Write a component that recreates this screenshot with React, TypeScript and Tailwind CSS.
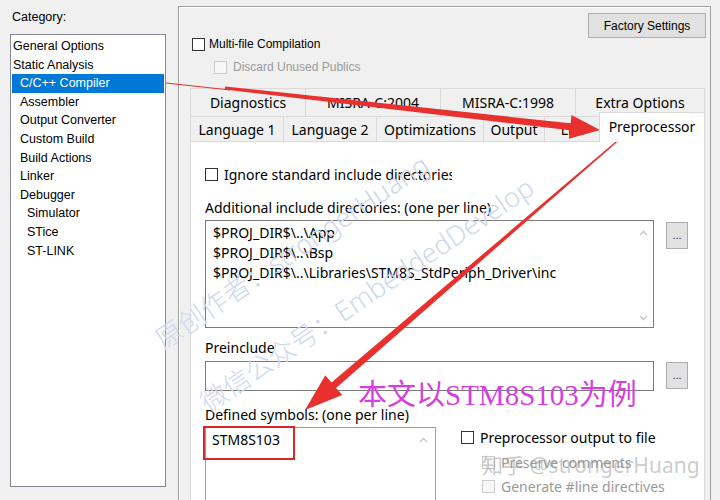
import React from "react";

type Tab = { label: string; w: string };

const ui = "font-['Noto_Sans','Noto_Sans_CJK_SC',sans-serif]";
const win = "font-['Liberation_Sans',Arial,sans-serif]";

const categories: [string, number][] = [
    ["General Options", 0],
    ["Static Analysis", 0],
    ["C/C++ Compiler", 1],
    ["Assembler", 1],
    ["Output Converter", 1],
    ["Custom Build", 1],
    ["Build Actions", 1],
    ["Linker", 1],
    ["Debugger", 1],
    ["Simulator", 2],
    ["STice", 2],
    ["ST-LINK", 2],
];

const indent = ["pl-[1px]", "pl-[8px]", "pl-[15px]"];

const row1: Tab[] = [
    { label: "Diagnostics", w: "w-[115px]" },
    { label: "MISRA-C:2004", w: "w-[135px]" },
    { label: "MISRA-C:1998", w: "w-[135px]" },
    { label: "Extra Options", w: "w-[130px] border-r" },
];

const row2: Tab[] = [
    { label: "Language 1", w: "w-[93px]" },
    { label: "Language 2", w: "w-[93px]" },
    { label: "Optimizations", w: "w-[107px]" },
    { label: "Output", w: "w-[61px]" },
    { label: "List", w: "w-[55px]" },
];

const includeDirs = [
    "$PROJ_DIR$\\..\\App",
    "$PROJ_DIR$\\..\\Bsp",
    "$PROJ_DIR$\\..\\Libraries\\STM8S_StdPeriph_Driver\\inc",
];

function Check ({ disabled }: { disabled?: boolean })
{
    return (
        <span
            className={
                disabled
                    ? "block w-[13px] h-[13px] shrink-0 border border-[#cccccc] bg-[#f7f7f7]"
                    : "block w-[13px] h-[13px] shrink-0 border border-[#333333] bg-white"
            }
        />
    );
}

function Chevron ({ up }: { up?: boolean })
{
    return (
        <svg width="9" height="6" viewBox="0 0 9 6" className="shrink-0">
            <path
                d={up ? "M1 5 L4.5 1.5 L8 5" : "M1 1 L4.5 4.5 L8 1"}
                fill="none"
                stroke="#c4c4c4"
                strokeWidth="1.3"
            />
        </svg>
    );
}

function DotsButton ()
{
    return (
        <button
            type="button"
            className={`ml-[12px] w-[22px] h-[27px] shrink-0 border border-[#adadad] bg-[#e1e1e1] text-[11px] leading-none text-[#222] ${win}`}
        >
            ...
        </button>
    );
}

export default function App ()
{
    return (
        <div className="relative w-[720px] h-[500px] overflow-hidden bg-[#f0f0f0] flex text-black">
            {/* category list */}
            <div className={`w-[178px] shrink-0 pl-[10px] pt-[9px] ${win}`}>
                <div className="pl-[2px] h-[16px] text-[12.5px] leading-[16px]">Category:</div>
                <div className="mt-[9px] w-[156px] h-[453px] border border-[#828790] bg-white px-px pt-[2px]">
                    {categories.map(([name, level]) => (
                        <div
                            key={name}
                            className={
                                name === "C/C++ Compiler"
                                    ? `h-[18.6px] leading-[18.6px] text-[12.5px] whitespace-nowrap bg-[#0078d7] text-white ${indent[level]}`
                                    : `h-[18.6px] leading-[18.6px] text-[12.5px] whitespace-nowrap ${indent[level]}`
                            }
                        >
                            {name}
                        </div>
                    ))}
                </div>
            </div>

            {/* options group */}
            <div className="mt-[6px] w-[533px] h-[520px] shrink-0 border border-[#a0a0a0] shadow-[inset_1px_1px_0_#ffffff] flex flex-col">
                <div className="flex justify-end pr-[4px] pt-[6px]">
                    <button
                        type="button"
                        className={`w-[118px] h-[25px] border border-[#adadad] bg-[#e1e1e1] text-[12px] ${win}`}
                    >
                        Factory Settings
                    </button>
                </div>
                <div className={`-mt-[2px] h-[16px] pl-[13px] flex items-center gap-[4px] text-[12px] ${win}`}>
                    <Check />
                    <span>Multi-file Compilation</span>
                </div>
                <div className={`mt-[7px] h-[16px] pl-[35px] flex items-center gap-[6px] text-[12px] text-[#9a9a9a] ${win}`}>
                    <Check disabled />
                    <span>Discard Unused Publics</span>
                </div>

                <div className={`mt-[13px] ml-[11px] w-[515px] flex-1 flex flex-col text-[14px] ${ui}`}>
                    <div className="flex h-[28px]">
                        {row1.map((t) => (
                            <div
                                key={t.label}
                                className={`${t.w} h-full border-t border-l border-[#d9d9d9] bg-[#f0f0f0] flex items-center justify-center whitespace-nowrap`}
                            >
                                {t.label}
                            </div>
                        ))}
                    </div>
                    <div className="flex items-end h-[25px]">
                        {row2.map((t) => (
                            <div
                                key={t.label}
                                className={`${t.w} h-[25px] border-t border-l border-[#d9d9d9] bg-[#f0f0f0] flex items-center justify-center whitespace-nowrap overflow-hidden`}
                            >
                                {t.label}
                            </div>
                        ))}
                        <div className="relative z-10 w-[106px] h-[30px] -mb-px border-t border-l border-r border-[#d9d9d9] bg-white flex justify-center pt-[3px] whitespace-nowrap">
                            Preprocessor
                        </div>
                    </div>

                    <div className="flex-1 bg-white border border-[#d9d9d9] pl-[14px] pt-[22px]">
                        <div className="h-[20px] flex items-center gap-[6px]">
                            <Check />
                            <span className="w-[228px] overflow-hidden whitespace-nowrap">
                                Ignore standard include directories
                            </span>
                        </div>

                        <div className="mt-[14px] h-[20px] leading-[20px] whitespace-nowrap">
                            Additional include directories: (one per line)
                        </div>
                        <div className="mt-[2px] flex items-start">
                            <div className="w-[449px] h-[108px] border border-[#7a7a7a] bg-white flex">
                                <div className="flex-1 pl-[7px] pt-[2px] leading-[20px]">
                                    {includeDirs.map((d) => (
                                        <div key={d} className="whitespace-nowrap">{d}</div>
                                    ))}
                                </div>
                                <div className="w-[20px] flex flex-col items-center justify-between pt-[9px] pb-[6px]">
                                    <Chevron up />
                                    <Chevron />
                                </div>
                            </div>
                            <div className="pt-[2px]">
                                <DotsButton />
                            </div>
                        </div>

                        <div className="mt-[10px] h-[20px] leading-[20px]">Preinclude</div>
                        <div className="mt-[3px] flex items-start">
                            <div className="w-[449px] h-[30px] border border-[#7a7a7a] bg-white" />
                            <div className="pt-[1px]">
                                <DotsButton />
                            </div>
                        </div>

                        <div className="mt-[14px] h-[20px] leading-[20px] whitespace-nowrap">
                            Defined symbols: (one per line)
                        </div>
                        <div className="mt-[2px] flex items-start">
                            <div className="w-[231px] h-[90px] border border-[#6aaae6] bg-white flex">
                                <div className="flex-1 pl-[6px] pt-[2px] leading-[20px]">STM8S103</div>
                                <div className="w-[24px] flex justify-center pt-[9px]">
                                    <Chevron up />
                                </div>
                            </div>
                            <div className="ml-[25px] flex flex-col">
                                <div className="h-[20px] flex items-center gap-[6px]">
                                    <Check />
                                    <span className="whitespace-nowrap">Preprocessor output to file</span>
                                </div>
                                <div className="mt-[5px] h-[20px] pl-[21px] flex items-center gap-[6px] text-[#9a9a9a]">
                                    <Check disabled />
                                    <span className="whitespace-nowrap">Preserve comments</span>
                                </div>
                                <div className="mt-[4px] h-[20px] pl-[21px] flex items-center gap-[6px] text-[#9a9a9a]">
                                    <Check disabled />
                                    <span className="whitespace-nowrap">Generate #line directives</span>
                                </div>
                            </div>
                        </div>
                    </div>
                </div>
            </div>

            {/* watermarks */}
            <div className={`absolute left-[158px] top-[326px] origin-[0_50%] rotate-[-34deg] text-[27px] leading-[32px] font-light whitespace-nowrap text-[#cfd9ed] pointer-events-none ${ui}`}>
                原创作者：strongerHuang
            </div>
            <div className={`absolute left-[203px] top-[389px] origin-[0_50%] rotate-[-34deg] text-[27px] leading-[32px] font-light whitespace-nowrap text-[#cfd9ed] pointer-events-none ${ui}`}>
                微信公众号：EmbeddedDevelop
            </div>
            <div className="absolute left-[358px] top-[377px] text-[29px] leading-[36px] whitespace-nowrap text-[#d63fdc] font-['Liberation_Serif','Noto_Sans_CJK_SC',serif] pointer-events-none">
                本文以STM8S103为例
            </div>
            <div className={`absolute left-[482px] top-[451px] text-[21px] leading-[28px] whitespace-nowrap text-[#8c8c8c]/45 pointer-events-none ${ui}`}>
                知乎 @strongerHuang
            </div>

            {/* annotation arrows */}
            <svg
                className="absolute left-0 top-0 pointer-events-none"
                width="720"
                height="500"
                viewBox="0 0 720 500"
            >
                <line x1="166" y1="83" x2="230" y2="90" stroke="#e8312f" strokeWidth="1.2" />
                <polygon
                    fill="#e8312f"
                    points="225.2,86.5 570.6,123.3 571.5,114.9 600,130 568.9,138.7 569.8,130.3 224.8,89.5"
                />
                <polygon
                    fill="#e8312f"
                    points="621.6,136.5 331.5,382.5 325.3,375.3 305,410 342.3,395.1 336.1,387.9 622.4,137.5"
                />
            </svg>
            <div className="absolute left-[203px] top-[426px] w-[92px] h-[34px] border-2 border-[#d9262b] pointer-events-none" />
        </div>
    );
}
